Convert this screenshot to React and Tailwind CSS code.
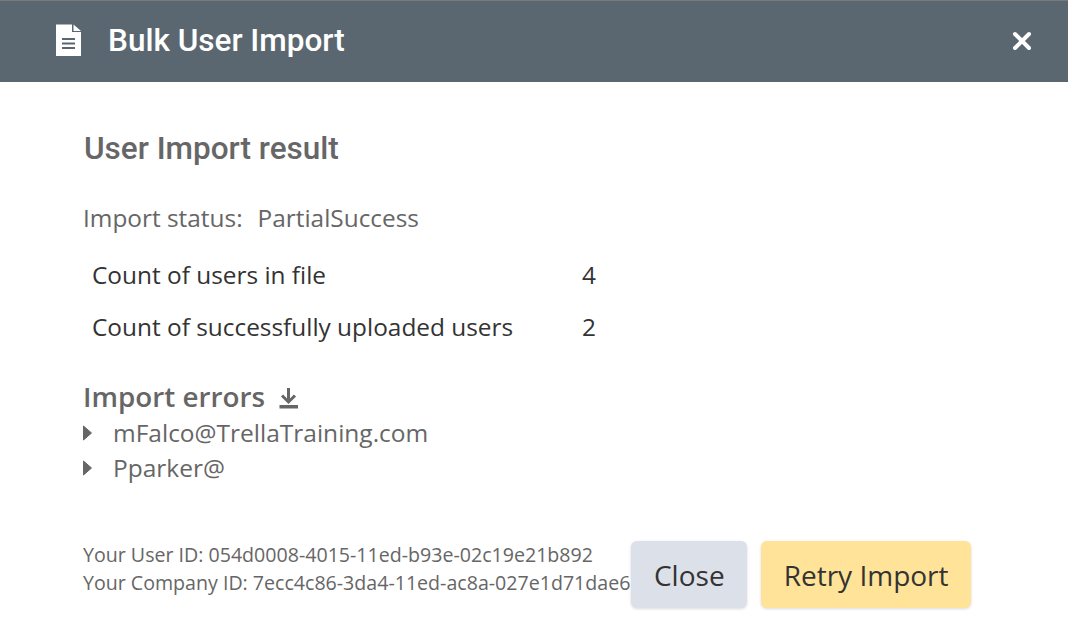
import React from "react";

const openSans = "font-['Open_Sans',sans-serif]";

function Caret() {
  return (
    <svg width="9" height="16" viewBox="0 0 9 16" className="shrink-0">
      <path d="M0.500 1 L8.500 8 L0.500 15 Z" fill="#666666" stroke="#666666" strokeWidth="1" strokeLinejoin="round" />
    </svg>
  );
}

function StatRow({ label, value, className }) {
  return (
    <div className={`flex items-center pl-[8px] text-[24.4px] leading-[32px] text-[#333333] ${className}`}>
      <span className="w-[490px]">{label}</span>
      <span>{value}</span>
    </div>
  );
}

function ErrorRow({ children, className }) {
  return (
    <div className={`flex items-center -ml-px text-[24.5px] leading-[32px] text-[#666666] ${className}`}>
      <Caret />
      <span className="ml-[21px]">{children}</span>
    </div>
  );
}

export default function App() {
  return (
    <div className={`w-[1068px] h-[636px] bg-white overflow-hidden flex flex-col ${openSans}`}>
      <header className="h-[82px] shrink-0 bg-[#5b6770] border-t border-[#7a7a7a] flex items-center pb-[3px] pl-[56px] pr-[36px] text-white">
        <svg width="25" height="32" viewBox="0 0 25 32" className="shrink-0">
          <path
            fillRule="evenodd"
            d="M0 .5 H16 V8 H25 V32 H0 Z M6 14 V16 H19 V14 Z M6 18.500 V20.500 H19 V18.500 Z M6 23 V25 H19 V23 Z"
            fill="#ffffff"
          />
          <path d="M17.500 .5 L25 7 H17.500 Z" fill="#ffffff" />
        </svg>
        <h1 className="ml-[27px] mt-[2px] font-['Roboto',sans-serif] font-medium text-[31.5px] leading-[40px] flex-1">Bulk User Import</h1>
        <svg width="20" height="20" viewBox="0 0 20 20" className="shrink-0 mt-[2px]">
          <path d="M3 3 L17 17 M17 3 L3 17" stroke="#ffffff" strokeWidth="4" strokeLinecap="round" />
        </svg>
      </header>

      <main className="flex-1 flex flex-col pl-[84px] pr-[97px]">
        <h2 className="mt-[48px] font-['Roboto',sans-serif] font-medium text-[31.5px] leading-[38px] text-[#666666]">User Import result</h2>

        <div className="mt-[34px] -ml-px text-[24.4px] leading-[32px] text-[#666666] flex">
          <span>Import status:</span>
          <span className="ml-[15px]">PartialSuccess</span>
        </div>

        <StatRow label="Count of users in file" value="4" className="mt-[25px]" />
        <StatRow label="Count of successfully uploaded users" value="2" className="mt-[20px]" />

        <div className="mt-[35px] -ml-px flex items-center text-[27.8px] font-semibold leading-[36px] text-[#666666]">
          <span>Import errors</span>
          <svg width="20" height="22" viewBox="0 0 20 22" className="ml-[14px] mt-[4px] shrink-0">
            <path d="M9.500 1 V15 M3 8.500 L9.500 15 L16 8.500" fill="none" stroke="#666666" strokeWidth="3" />
            <rect x="0.500" y="18" width="18.500" height="3.500" fill="#666666" />
          </svg>
        </div>
        <ErrorRow className="mt-[3px]">mFalco@TrellaTraining.com</ErrorRow>
        <ErrorRow className="mt-[3px]">Pparker@</ErrorRow>

        <footer className="mt-[57px] -ml-px flex items-start">
          <div className="text-[19.6px] leading-[28px] text-[#666666] whitespace-nowrap">
            <div>Your User ID: 054d0008-4015-11ed-b93e-02c19e21b892</div>
            <div>Your Company ID: 7ecc4c86-3da4-11ed-ac8a-027e1d71dae6</div>
          </div>
          <button className="ml-px w-[116px] h-[67px] rounded-[6px] bg-[#dce0e8] text-[28px] text-[#333333] shadow-[0_1px_3px_rgba(0,0,0,0.15)]">Close</button>
          <button className="ml-[14px] w-[210px] h-[67px] rounded-[6px] bg-[#ffe398] text-[28px] text-[#333333] shadow-[0_1px_3px_rgba(0,0,0,0.15)]">Retry Import</button>
        </footer>
      </main>
    </div>
  );
}
